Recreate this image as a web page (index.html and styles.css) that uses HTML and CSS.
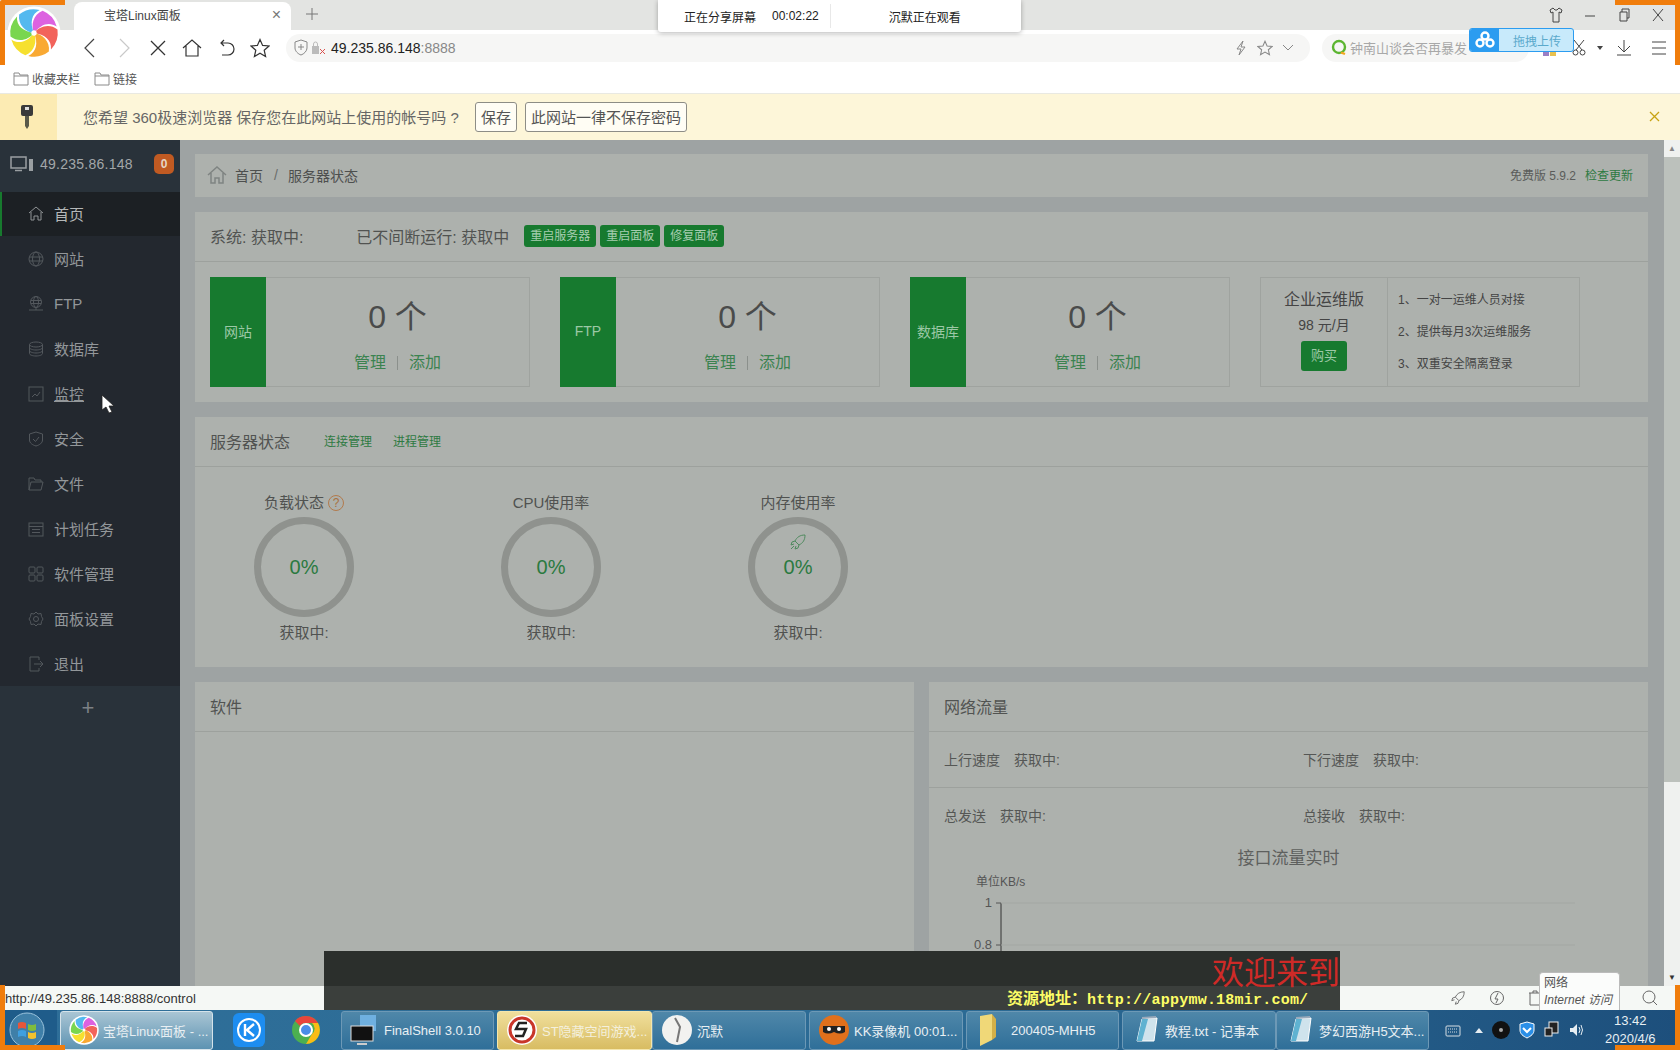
FILE: index.html
```html
<!DOCTYPE html>
<html lang="zh-CN">
<head>
<meta charset="utf-8">
<title>宝塔Linux面板</title>
<link rel="stylesheet" href="styles.css">
</head>
<body>
<svg class="sprites" width="0" height="0">
  <defs>
    <path id="petal" d="M0 0C-3-7-1-17 8-20.500A22 22 0 0 1 21-6C14-11 6-8 0 0Z"/>
    <symbol id="pinwheel" viewBox="-25 -25 50 50">
      <circle r="24.500" fill="#fff"/>
      <use href="#petal" fill="#dd62e0"/>
      <use href="#petal" fill="#f2635b" transform="rotate(60)"/>
      <use href="#petal" fill="#f9a933" transform="rotate(120)"/>
      <use href="#petal" fill="#f6e02f" transform="rotate(180)"/>
      <use href="#petal" fill="#79d64f" transform="rotate(240)"/>
      <use href="#petal" fill="#54b9ef" transform="rotate(300)"/>
      <circle r="2.500" fill="#fff"/>
    </symbol>
    <symbol id="folder" viewBox="0 0 16 14">
      <path d="M1 13V1h5l1 2h8v10z" fill="#fff" stroke="#8a8a8a"/>
      <path d="M1 4h14" stroke="#8a8a8a" fill="none"/>
    </symbol>
    <symbol id="notepad" viewBox="0 0 30 30">
      <path d="M6 26 11 4 26 3 23 26z" fill="#cfe3ec" stroke="#fff"/>
      <path d="M6 26 11 4 17 4 11 26z" fill="#5fb2d1"/>
      <path d="M11 3l14-1" stroke="#9ab" stroke-width="2"/>
    </symbol>
  </defs>
</svg>

<div class="tabstrip">
  <div class="tab">
    <span class="tab-title">宝塔Linux面板</span>
    <span class="tab-x">×</span>
  </div>
  <svg class="tab-plus" width="14" height="14" viewBox="0 0 14 14"><path d="M7 1v12M1 7h12" stroke="#777" fill="none"/></svg>
  <div class="winctl">
    <svg width="14" height="16" viewBox="0 0 14 16"><path d="M4 1 1 3l1 3 2-1v10h6V5l2 1 1-3-3-2-2 2H6z" fill="none" stroke="#444"/></svg>
    <svg width="14" height="16" viewBox="0 0 14 16"><path d="M2 9h10" stroke="#444" fill="none"/></svg>
    <svg width="14" height="16" viewBox="0 0 14 16"><path d="M3 5h7v9H3zM5 5V2h7v9h-2" stroke="#444" fill="none"/></svg>
    <svg width="14" height="16" viewBox="0 0 14 16"><path d="M2 2l10 12M12 2 2 14" stroke="#444" fill="none"/></svg>
  </div>
</div>

<div class="toolbar">
  <button class="nav"><svg width="18" height="20" viewBox="0 0 18 20"><path d="M13 1 4 10l9 9" fill="none" stroke="#444" stroke-width="1.2"/></svg></button>
  <button class="nav"><svg width="18" height="20" viewBox="0 0 18 20"><path d="M5 1l9 9-9 9" fill="none" stroke="#c9c9c9" stroke-width="1.2"/></svg></button>
  <button class="nav"><svg width="18" height="18" viewBox="0 0 18 18"><path d="M2 2l14 14M16 2 2 16" fill="none" stroke="#333" stroke-width="1.3"/></svg></button>
  <button class="nav"><svg width="20" height="20" viewBox="0 0 20 20"><path d="M1 10 10 2l9 8M4 8v10h12V8" fill="none" stroke="#333" stroke-width="1.2"/></svg></button>
  <button class="nav"><svg width="18" height="18" viewBox="0 0 18 18"><path d="M4 4h7a5 5 0 0 1 0 12H5M7 1 4 4l3 3" fill="none" stroke="#333" stroke-width="1.2"/></svg></button>
  <button class="nav"><svg width="20" height="20" viewBox="0 0 20 20"><path d="M10 1.500 12.600 7.400 19 8 14.200 12.200 15.600 18.500 10 15.200 4.400 18.500 5.800 12.200 1 8 7.400 7.400z" fill="none" stroke="#333" stroke-width="1.2"/></svg></button>
  <div class="address">
    <svg width="14" height="17" viewBox="0 0 14 17"><path d="M7 1l6 2v6c0 3-3 6-6 7-3-1-6-4-6-7V3z" fill="none" stroke="#888"/><path d="M7 5v6M4 8h6" stroke="#888"/></svg>
    <svg width="15" height="14" viewBox="0 0 15 14"><rect x="1" y="5" width="7" height="8" fill="#bbb"/><path d="M2.500 5V3a2 2 0 0 1 4 0v2" fill="none" stroke="#bbb"/><path d="M9 8l5 5M14 8l-5 5" stroke="#d9534f"/></svg>
    <span class="url">49.235.86.148<span class="url-port">:8888</span></span>
    <span class="addr-tools">
      <svg width="14" height="16" viewBox="0 0 14 16"><path d="M9 1 3 9h4l-2 6 6-8H7z" fill="none" stroke="#888"/></svg>
      <svg width="16" height="16" viewBox="0 0 20 20"><path d="M10 1.500 12.600 7.400 19 8 14.200 12.200 15.600 18.500 10 15.200 4.400 18.500 5.800 12.200 1 8 7.400 7.400z" fill="none" stroke="#888" stroke-width="1.300"/></svg>
      <svg width="12" height="8" viewBox="0 0 12 8"><path d="M1 1l5 5 5-5" fill="none" stroke="#888"/></svg>
    </span>
  </div>
  <div class="search">
    <svg width="16" height="18" viewBox="0 0 16 18"><circle cx="8" cy="8" r="6" fill="none" stroke="#5cb531" stroke-width="2.400"/><path d="M10 13.500 14 15" stroke="#f2a51f" stroke-width="2.400"/></svg>
    <span class="search-text">钟南山谈会否再暴发</span>
  </div>
  <div class="tools">
    <svg class="tool-apps" width="14" height="18" viewBox="0 0 14 18"><rect x="0" y="12" width="6" height="5" fill="#9a7fc4"/><rect x="7" y="12" width="6" height="5" fill="#e9c14f"/></svg>
    <svg class="tool-cut" width="14" height="17" viewBox="0 0 14 17"><path d="M2 1l8 10M12 1 4 11" stroke="#444" fill="none"/><circle cx="3.500" cy="13.500" r="2.500" fill="none" stroke="#444"/><circle cx="10.500" cy="13.500" r="2.500" fill="none" stroke="#444"/></svg>
    <svg width="6" height="4" viewBox="0 0 6 4"><path d="M0 0h6L3 4z" fill="#444"/></svg>
    <svg class="tool-down" width="16" height="17" viewBox="0 0 16 17"><path d="M8 1v12M2 7l6 6 6-6M1 16h14" fill="none" stroke="#444"/></svg>
    <svg class="tool-menu" width="16" height="16" viewBox="0 0 16 16"><path d="M1 2h14M1 8h14M1 14h14" fill="none" stroke="#444"/></svg>
  </div>
</div>

<div class="bookmarks">
  <span class="bm"><svg width="16" height="14"><use href="#folder"/></svg>收藏夹栏</span>
  <span class="bm"><svg width="16" height="14"><use href="#folder"/></svg>链接</span>
</div>

<div class="infobar">
  <div class="key">
    <svg width="14" height="26" viewBox="0 0 14 26"><rect x="1" y="1" width="12" height="11" rx="2" fill="#3a3a3a"/><rect x="5" y="3" width="4" height="3" fill="#ddd"/><path d="M5 12h4v10l-2 3-2-3z" fill="#5a5a4a"/></svg>
  </div>
  <span class="info-text">您希望 360极速浏览器 保存您在此网站上使用的帐号吗 ?</span>
  <button class="info-btn">保存</button>
  <button class="info-btn">此网站一律不保存密码</button>
  <svg class="info-x" width="11" height="11" viewBox="0 0 11 11"><path d="M1 1l9 9M10 1l-9 9" stroke="#c8a313" stroke-width="1.300" fill="none"/></svg>
</div>

<div class="app">
  <aside class="sidebar">
    <div class="side-head">
      <svg width="24" height="16" viewBox="0 0 24 16"><rect x="1" y="1" width="15" height="11" fill="none" stroke="#9a9fa2" stroke-width="1.500"/><path d="M5 14.500h7" stroke="#9a9fa2" stroke-width="1.500"/><rect x="19" y="3" width="4" height="12" fill="#9a9fa2"/></svg>
      <span class="side-ip">49.235.86.148</span>
      <span class="badge">0</span>
    </div>
    <nav class="menu">
      <a class="menu-item is-active"><svg viewBox="0 0 16 16"><path d="M1 8l7-6 7 6M3 7v8h3v-4h4v4h3V7"/></svg>首页</a>
      <a class="menu-item"><svg viewBox="0 0 16 16"><circle cx="8" cy="8" r="7"/><ellipse cx="8" cy="8" rx="3.500" ry="7"/><path d="M1 6h14M1 10h14"/></svg>网站</a>
      <a class="menu-item"><svg viewBox="0 0 16 16"><circle cx="8" cy="6" r="5.500"/><ellipse cx="8" cy="6" rx="2.500" ry="5.500"/><path d="M3 4.500h10M3 7.500h10M1 14h14M8 12v2"/></svg>FTP</a>
      <a class="menu-item"><svg viewBox="0 0 16 16"><ellipse cx="8" cy="3.500" rx="6.500" ry="2.500"/><path d="M1.500 3.500v9c0 1.400 3 2.500 6.500 2.500s6.500-1.100 6.500-2.500v-9M1.500 6.500c0 1.400 3 2.500 6.500 2.500s6.500-1.100 6.500-2.500M1.500 9.500c0 1.400 3 2.500 6.500 2.500s6.500-1.100 6.500-2.500"/></svg>数据库</a>
      <a class="menu-item"><svg viewBox="0 0 16 16"><rect x="1" y="1" width="14" height="14"/><path d="M4 11l3-3 2 2 3-4"/></svg><span class="hover-u">监控</span></a>
      <a class="menu-item"><svg viewBox="0 0 16 16"><path d="M8 1l6.500 2v6c0 3-3 5-6.500 6-3.500-1-6.500-3-6.500-6V3z"/><path d="M5 8l2.500 2.500L11 6"/></svg>安全</a>
      <a class="menu-item"><svg viewBox="0 0 16 16"><path d="M1 14V2h5l1 2h6v2M1 14l2-8h12l-2 8z"/></svg>文件</a>
      <a class="menu-item"><svg viewBox="0 0 16 16"><rect x="1" y="2" width="14" height="13"/><path d="M1 5.500h14M4 8.500h8M4 11.500h8"/></svg>计划任务</a>
      <a class="menu-item"><svg viewBox="0 0 16 16"><rect x="1" y="1" width="6" height="6" rx="1"/><rect x="9" y="1" width="6" height="6" rx="1"/><rect x="1" y="9" width="6" height="6" rx="1"/><rect x="9" y="9" width="6" height="6" rx="1"/></svg>软件管理</a>
      <a class="menu-item"><svg viewBox="0 0 16 16"><path d="M8 1l2 2 3-.5.500 3L15 8l-1.500 2.500-.5 3-3-.5-2 2-2-2-3 .5-.5-3L1 8l1.500-2.500.5-3 3 .5z"/><circle cx="8" cy="8" r="2.500"/></svg>面板设置</a>
      <a class="menu-item"><svg viewBox="0 0 16 16"><path d="M11 4V1H2v14h9v-3M6 8h9M12 5l3 3-3 3"/></svg>退出</a>
    </nav>
    <div class="side-add">+</div>
  </aside>

  <main class="main">
    <section class="panel crumb">
      <svg width="20" height="18" viewBox="0 0 20 18"><path d="M1 9l9-8 9 8M4 7v10h4v-5h4v5h4V7" fill="none" stroke="#7f8482" stroke-width="1.500"/></svg>
      <span class="crumb-a">首页</span>
      <span class="crumb-sep">/</span>
      <span class="crumb-b">服务器状态</span>
      <span class="crumb-right">免费版 5.9.2<a class="update">检查更新</a></span>
    </section>

    <section class="panel">
      <div class="panel-head sys-head">
        <span class="sys-a">系统: 获取中:</span>
        <span class="sys-b">已不间断运行: 获取中</span>
        <span class="gbtn">重启服务器</span>
        <span class="gbtn">重启面板</span>
        <span class="gbtn">修复面板</span>
      </div>
      <div class="cards">
        <div class="card"><div class="card-tag">网站</div><div class="card-body"><div class="count">0 个</div><div class="links"><a>管理</a><i></i><a>添加</a></div></div></div>
        <div class="card"><div class="card-tag">FTP</div><div class="card-body"><div class="count">0 个</div><div class="links"><a>管理</a><i></i><a>添加</a></div></div></div>
        <div class="card"><div class="card-tag">数据库</div><div class="card-body"><div class="count">0 个</div><div class="links"><a>管理</a><i></i><a>添加</a></div></div></div>
        <div class="promo">
          <div class="promo-left">
            <div class="promo-title">企业运维版</div>
            <div class="promo-price">98 元/月</div>
            <span class="promo-buy">购买</span>
          </div>
          <ul class="promo-list">
            <li>1、一对一运维人员对接</li>
            <li>2、提供每月3次运维服务</li>
            <li>3、双重安全隔离登录</li>
          </ul>
        </div>
      </div>
    </section>

    <section class="panel">
      <div class="panel-head status-head">
        <span class="panel-title">服务器状态</span>
        <a class="glink">连接管理</a>
        <a class="glink">进程管理</a>
      </div>
      <div class="gauges">
        <div class="gauge">
          <div class="gauge-label">负载状态 <span class="help">?</span></div>
          <div class="ring">0%</div>
          <div class="gauge-sub">获取中:</div>
        </div>
        <div class="gauge">
          <div class="gauge-label">CPU使用率</div>
          <div class="ring">0%</div>
          <div class="gauge-sub">获取中:</div>
        </div>
        <div class="gauge">
          <div class="gauge-label">内存使用率</div>
          <div class="ring">
            <svg class="rocket" width="18" height="18" viewBox="0 0 18 18"><path d="M16 2c-5 0-8 2-10 6l4 4c4-2 6-5 6-10zM6 8 3 9l-1 3 3-1M10 12l-1 3-3 1 1-3M5 13l-3 3" fill="none" stroke="#4f8a5e"/></svg>
            0%
          </div>
          <div class="gauge-sub">获取中:</div>
        </div>
      </div>
    </section>

    <div class="split">
      <section class="panel half">
        <div class="panel-head"><span class="panel-title">软件</span></div>
      </section>
      <section class="panel half">
        <div class="panel-head"><span class="panel-title">网络流量</span></div>
        <div class="net-row line"><span class="net-cell"><b>上行速度</b>获取中:</span><span class="net-cell"><b>下行速度</b>获取中:</span></div>
        <div class="net-row"><span class="net-cell"><b>总发送</b>获取中:</span><span class="net-cell"><b>总接收</b>获取中:</span></div>
        <div class="chart-title">接口流量实时</div>
        <svg class="chart" width="719" height="160" viewBox="0 0 719 160">
          <text x="47" y="15" class="chart-unit">单位KB/s</text>
          <path d="M72 32V160" stroke="#333" fill="none"/>
          <path d="M67 32h5M67 74h5M67 116h5" stroke="#555" fill="none"/>
          <path d="M72 32H646M72 74H646M72 116H646" stroke="#a3a7a3" fill="none"/>
          <text x="63" y="36" class="chart-num" text-anchor="end">1</text>
          <text x="63" y="78" class="chart-num" text-anchor="end">0.8</text>
          <text x="63" y="120" class="chart-num" text-anchor="end">0.6</text>
        </svg>
      </section>
    </div>
  </main>

  <div class="scrollbar">
    <span class="sb-arrow">▲</span>
    <div class="sb-thumb"></div>
    <div class="sb-track"></div>
    <span class="sb-arrow sb-down">▼</span>
  </div>
</div>

<div class="statusbar">
  <span class="status-url">http://49.235.86.148:8888/control</span>
  <span class="status-icons">
    <svg width="16" height="16" viewBox="0 0 18 18"><path d="M16 2c-5 0-8 2-10 6l4 4c4-2 6-5 6-10zM6 8 3 9l-1 3 3-1M10 12l-1 3-3 1 1-3" fill="none" stroke="#666"/></svg>
    <svg width="16" height="16" viewBox="0 0 16 16"><circle cx="8" cy="8" r="6.500" fill="none" stroke="#666"/><path d="M9 3 6 9h3l-2 4" fill="none" stroke="#666"/></svg>
    <svg width="14" height="16" viewBox="0 0 14 16"><path d="M1 3h12M5 3V1h4v2M2 3v12h10V3" fill="none" stroke="#666"/></svg>
    <svg class="status-find" width="16" height="16" viewBox="0 0 16 16"><circle cx="7" cy="7" r="6" fill="none" stroke="#666"/><path d="M11 11l4 4" stroke="#666"/></svg>
  </span>
</div>

<footer class="taskbar">
  <div class="orb">
    <svg width="36" height="36" viewBox="0 0 36 36"><circle cx="18" cy="18" r="17" fill="#3f7fa8" stroke="#9bc3dc"/><path d="M9 11q4-2 8 0v6q-4-2-8 0z" fill="#e6563a"/><path d="M19 12q4 2 8 0v6q-4 2-8 0z" fill="#7fbd3c"/><path d="M9 19q4-2 8 0v6q-4-2-8 0z" fill="#3f9fe0"/><path d="M19 20q4 2 8 0v6q-4 2-8 0z" fill="#f2c12e"/></svg>
  </div>
  <div class="task task-light w153"><svg width="30" height="30"><use href="#pinwheel"/></svg>宝塔Linux面板 - ...</div>
  <div class="quick">
    <svg width="32" height="34" viewBox="0 0 32 34"><rect width="32" height="34" rx="6" fill="#1d8df0"/><circle cx="16" cy="17" r="11" fill="none" stroke="#fff" stroke-width="2"/><path d="M12 11v12M21 11l-7 6 7 6" fill="none" stroke="#fff" stroke-width="2.400"/></svg>
    <svg width="30" height="30" viewBox="0 0 30 30"><circle cx="15" cy="15" r="14" fill="#4caf50"/><path d="M15 1a14 14 0 0 1 12 7H15a7 7 0 0 0-6 3L4 6a14 14 0 0 1 11-5z" fill="#e8453c"/><path d="M27 8a14 14 0 0 1-12 21l6-10a7 7 0 0 0 0-11z" fill="#f9bc15"/><circle cx="15" cy="15" r="6" fill="#4a8de8" stroke="#fff" stroke-width="2"/></svg>
  </div>
  <div class="task w153"><svg width="30" height="32" viewBox="0 0 30 32"><rect x="10" y="1" width="16" height="16" fill="#6fb0e0"/><rect x="1" y="12" width="22" height="15" fill="#111" stroke="#ddd"/><path d="M7 30h10" stroke="#ccc" stroke-width="2"/></svg>FinalShell 3.0.10</div>
  <div class="task-group">
    <div class="task task-yellow w155"><svg width="32" height="32" viewBox="0 0 32 32"><circle cx="16" cy="16" r="15" fill="#fff"/><circle cx="16" cy="16" r="12" fill="none" stroke="#c9362a" stroke-width="3"/><path d="M21 9H13l-3 6h10l-3 7H9" fill="none" stroke="#222" stroke-width="2.500"/></svg>ST隐藏空间游戏...</div>
    <div class="task w154"><svg width="32" height="32" viewBox="0 0 32 32"><circle cx="16" cy="16" r="15" fill="#f2f2f0"/><path d="M14 4l5 9-3 15" fill="none" stroke="#777" stroke-width="2"/></svg>沉默</div>
  </div>
  <div class="task w154"><svg width="32" height="32" viewBox="0 0 32 32"><circle cx="16" cy="16" r="15" fill="#e0701c"/><path d="M5 12h22v6q-5 3-11 0-6 3-11 0z" fill="#222"/><circle cx="11" cy="15" r="2" fill="#fff"/><circle cx="21" cy="15" r="2" fill="#fff"/></svg>KK录像机 00:01...</div>
  <div class="task w153"><svg width="26" height="34" viewBox="0 0 26 34"><path d="M5 3 17 1v26L5 33z" fill="#f0d878"/><path d="M17 1l4 5v18l-4 3z" fill="#d4b048"/></svg><span class="task-pad">200405-MHH5</span></div>
  <div class="task-group">
    <div class="task w154"><svg width="30" height="30"><use href="#notepad"/></svg>教程.txt - 记事本</div>
    <div class="task w153"><svg width="30" height="30"><use href="#notepad"/></svg>梦幻西游H5文本...</div>
  </div>
  <div class="tray">
    <svg class="tray-kbd" width="16" height="14" viewBox="0 0 16 14"><rect x="1" y="3" width="14" height="10" rx="1" fill="none" stroke="#d5dde2"/><path d="M3 6h10M3 9h10" stroke="#d5dde2" stroke-dasharray="1 1"/></svg>
    <svg width="8" height="5" viewBox="0 0 8 5"><path d="M0 5l4-5 4 5z" fill="#e6edf2"/></svg>
    <svg width="18" height="18" viewBox="0 0 18 18"><circle cx="9" cy="9" r="9" fill="#111"/><circle cx="9" cy="9" r="2" fill="#aaa"/></svg>
    <svg width="16" height="18" viewBox="0 0 16 18"><path d="M8 1l7 2v6c0 4-3 6-7 8-4-2-7-4-7-8V3z" fill="#2a8fe8" stroke="#fff"/><path d="M4 7l4 4 4-4" fill="none" stroke="#fff" stroke-width="2"/></svg>
    <svg width="16" height="18" viewBox="0 0 16 18"><rect x="5" y="1" width="9" height="11" fill="#222" stroke="#eee"/><rect x="1" y="7" width="7" height="8" fill="#222" stroke="#eee"/></svg>
    <svg width="16" height="16" viewBox="0 0 16 16"><path d="M1 6v4h3l4 4V2L4 6z" fill="#e6edf2"/><path d="M10 5q2 3 0 6M12 3q3 5 0 10" fill="none" stroke="#e6edf2"/></svg>
    <div class="clock"><span>13:42</span><span>2020/4/6</span></div>
  </div>
</footer>

<svg class="logo" width="54" height="54"><use href="#pinwheel"/></svg>

<div class="share">
  <span class="share-a">正在分享屏幕</span>
  <span class="share-time">00:02:22</span>
  <span class="share-b">沉默正在观看</span>
</div>

<div class="upload">
  <span class="upload-ico"><svg width="20" height="18" viewBox="0 0 20 18"><circle cx="10" cy="5" r="3.500" fill="none" stroke="#fff" stroke-width="2.400"/><circle cx="5" cy="12" r="3.500" fill="none" stroke="#fff" stroke-width="2.400"/><circle cx="15" cy="12" r="3.500" fill="none" stroke="#fff" stroke-width="2.400"/></svg></span>
  <span class="upload-text">拖拽上传</span>
</div>

<svg class="cursor" width="14" height="20" viewBox="0 0 14 20"><path d="M1 1v15l4-3 3 6 3-1-3-6h5z" fill="#fff" stroke="#222" stroke-width=".8"/></svg>

<div class="ribbon">
  <div class="ribbon-top"><span class="ribbon-red">欢迎来到</span></div>
  <div class="ribbon-bottom"><span class="ribbon-yellow">资源地址：<span class="ribbon-url">http://appymw.18mir.com/</span></span></div>
</div>

<div class="nettip"><span>网络</span><em>Internet 访问</em></div>

<div class="corner c-tl"></div>
<div class="corner c-tr"></div>
<div class="corner c-bl"></div>
<div class="corner c-br"></div>
</body>
</html>
```

FILE: styles.css
```css
* { box-sizing: border-box; }
html, body { margin: 0; padding: 0; }
body {
  position: relative;
  width: 1680px;
  height: 1050px;
  overflow: hidden;
  display: flex;
  flex-direction: column;
  background: #fff;
  font-family: "Liberation Sans", "Noto Sans CJK SC", sans-serif;
  color: #555;
}
.sprites { position: absolute; }
a { color: inherit; text-decoration: none; }
button { font-family: inherit; }

/* browser frame */
.tabstrip {
  height: 30px;
  flex: none;
  display: flex;
  align-items: flex-end;
  background: #e3e4e2;
  padding-left: 74px;
}
.tab {
  width: 217px;
  height: 28px;
  display: flex;
  align-items: center;
  justify-content: space-between;
  padding: 0 10px 3px 30px;
  background: #fff;
  border-radius: 8px 8px 0 0;
  font-size: 12px;
  color: #444;
}
.tab-x { font-size: 16px; color: #777; }
.tab-plus { margin: 0 0 9px 14px; }
.winctl {
  margin: 0 15px 7px auto;
  display: flex;
  gap: 20px;
}
.toolbar {
  height: 32px;
  flex: none;
  display: flex;
  align-items: center;
  padding: 3px 0 0 73px;
  background: #fff;
  position: relative;
}
.nav {
  width: 34px;
  height: 28px;
  padding: 0;
  border: 0;
  background: none;
  display: flex;
  align-items: center;
  justify-content: center;
}
.address {
  width: 1024px;
  height: 28px;
  margin-left: 9px;
  display: flex;
  align-items: center;
  gap: 3px;
  padding-left: 8px;
  padding-right: 16px;
  background: #f6f6f5;
  border-radius: 14px;
}
.url { font-size: 14px; color: #222; margin-left: 2px; }
.url-port { color: #888; }
.addr-tools { margin-left: auto; display: flex; align-items: center; gap: 9px; }
.search {
  width: 207px;
  height: 28px;
  margin-left: 12px;
  display: flex;
  align-items: center;
  gap: 3px;
  padding-left: 9px;
  background: #f6f6f5;
  border-radius: 14px;
}
.search-text { font-size: 13px; color: #a8a8a8; white-space: nowrap; }
.tools {
  margin-left: 14px;
  display: flex;
  align-items: center;
  gap: 11px;
}
.tool-apps { margin-right: 4px; }
.tool-down { margin-left: 2px; }
.tool-menu { margin-left: 8px; }
.bookmarks {
  height: 32px;
  flex: none;
  display: flex;
  align-items: center;
  gap: 14px;
  padding: 2px 0 0 13px;
  background: #fff;
  border-bottom: 1px solid #e9e9e2;
}
.bm {
  display: flex;
  align-items: center;
  gap: 3px;
  font-size: 12px;
  color: #555;
}
.infobar {
  height: 46px;
  flex: none;
  display: flex;
  align-items: center;
  padding-bottom: 1px;
  background: #fdf6d9;
}
.key {
  width: 57px;
  height: 46px;
  margin-bottom: -1px;
  padding-right: 4px;
  display: flex;
  align-items: center;
  justify-content: center;
  background: #fcebb3;
}
.info-text { margin-left: 26px; font-size: 15px; color: #666; }
.info-btn {
  height: 30px;
  margin-left: 8px;
  padding: 0 5px;
  background: #fffdf4;
  border: 1px solid #8d8d86;
  border-radius: 3px;
  font-size: 15px;
  color: #555;
}
.info-btn:first-of-type { margin-left: 16px; }
.info-x { margin-left: auto; margin-right: 20px; }

/* app */
.app {
  height: 846px;
  flex: none;
  display: flex;
  overflow: hidden;
}
.sidebar {
  width: 180px;
  flex: none;
  display: flex;
  flex-direction: column;
  background: #29323a;
}
.side-head {
  height: 52px;
  flex: none;
  display: flex;
  align-items: center;
  padding: 0 0 4px 10px;
  gap: 6px;
}
.side-ip { font-size: 14px; letter-spacing: .25px; color: #a3a7a9; }
.badge {
  width: 20px;
  height: 20px;
  margin-left: auto;
  margin-right: 6px;
  border-radius: 5px;
  background: #c05a22;
  color: #e6d5c5;
  font-size: 12px;
  font-weight: bold;
  text-align: center;
  line-height: 20px;
}
.menu { background: #23282f; }
.menu-item {
  height: 45px;
  display: flex;
  align-items: center;
  gap: 10px;
  padding-left: 28px;
  font-size: 15px;
  color: #93979a;
}
.menu-item svg {
  width: 16px;
  height: 16px;
  flex: none;
  fill: none;
  stroke: #53585d;
  stroke-width: 1;
}
.menu-item.is-active {
  height: 44px;
  padding-bottom: 2px;
  background: #1c2024;
  box-shadow: inset 2px 0 0 #177a2e;
  color: #b4b7b8;
}
.menu-item.is-active svg { stroke: #8f9395; }
.hover-u { text-decoration: underline; }
.side-add {
  height: 42px;
  padding-right: 4px;
  text-align: center;
  font-size: 22px;
  line-height: 43px;
  color: #7c8185;
}

.main {
  flex: 1;
  min-width: 0;
  padding: 14px 16px 0 15px;
  background: #9ea3a3;
  overflow: hidden;
}
.panel {
  background: #adb1ad;
  margin-bottom: 15px;
}
.crumb {
  height: 43px;
  display: flex;
  align-items: center;
  padding: 0 15px 2px 12px;
  font-size: 14px;
  color: #4d4f4e;
}
.crumb-a { margin-left: 8px; }
.crumb-sep { margin: 0 10px 0 11px; color: #6a6d6b; }
.crumb-right { margin-left: auto; font-size: 12px; color: #5a5c5a; }
.update { margin-left: 9px; color: #2d7a42; }

.panel-head {
  height: 50px;
  display: flex;
  align-items: center;
  padding: 0 0 2px 15px;
  border-bottom: 1px solid #9da19d;
}
.panel-title { font-size: 16px; color: #515351; }
.sys-head { font-size: 16px; color: #515351; padding-bottom: 1px; }
.sys-head > span:nth-child(-n+2) { margin-bottom: 1px; }
.sys-b { margin-left: 53px; margin-right: 15px; }
.gbtn {
  height: 22px;
  margin-right: 4px;
  padding: 0 6px;
  background: #177a2f;
  border-radius: 3px;
  font-size: 12px;
  line-height: 22px;
  color: #a6cdb0;
}
.cards {
  display: flex;
  gap: 30px;
  padding: 15px;
}
.card {
  width: 320px;
  height: 110px;
  display: flex;
  border: 1px solid #9fa39f;
}
.card-tag {
  width: 56px;
  margin: -1px 0 -1px -1px;
  padding-bottom: 2px;
  display: flex;
  align-items: center;
  justify-content: center;
  background: #177a2f;
  color: #9cc8a6;
  font-size: 14px;
}
.card-body {
  flex: 1;
  display: flex;
  flex-direction: column;
  align-items: center;
}
.count {
  margin-top: 16px;
  font-size: 32px;
  line-height: 46px;
  color: #4a4b4b;
}
.links {
  margin-top: 11px;
  display: flex;
  align-items: center;
  gap: 11px;
  font-size: 16px;
  line-height: 24px;
  color: #3b8350;
}
.links i {
  width: 1px;
  height: 14px;
  background: #8b908c;
}
.promo {
  width: 320px;
  height: 110px;
  display: flex;
  border: 1px solid #9fa39f;
}
.promo-left {
  width: 127px;
  display: flex;
  flex-direction: column;
  align-items: center;
  border-right: 1px solid #9fa39f;
}
.promo-title { margin-top: 10px; font-size: 16px; line-height: 24px; color: #444; }
.promo-price { font-size: 14px; line-height: 26px; color: #444; }
.promo-buy {
  width: 46px;
  height: 30px;
  margin-top: 3px;
  background: #177a2f;
  border-radius: 3px;
  font-size: 13px;
  line-height: 30px;
  text-align: center;
  color: #9cc8a6;
}
.promo-list {
  list-style: none;
  margin: 0;
  padding: 6px 0 0 10px;
  font-size: 12px;
  line-height: 32px;
  color: #444;
}

.status-head { gap: 21px; }
.status-head .panel-title { margin-right: 13px; }
.glink { font-size: 12px; color: #2d7a42; }
.gauges {
  display: flex;
  gap: 59px;
  padding: 24px 0 22px 15px;
}
.gauge {
  width: 188px;
  display: flex;
  flex-direction: column;
  align-items: center;
}
.gauge-label {
  height: 24px;
  font-size: 15px;
  line-height: 24px;
  color: #505250;
  white-space: nowrap;
}
.help {
  display: inline-block;
  width: 16px;
  height: 16px;
  border: 1px solid #b27a4c;
  border-radius: 50%;
  font-size: 12px;
  line-height: 14px;
  text-align: center;
  color: #a8703f;
  vertical-align: 1px;
}
.ring {
  position: relative;
  width: 100px;
  height: 100px;
  margin-top: 2px;
  display: flex;
  align-items: center;
  justify-content: center;
  border: 7px solid #8f928e;
  border-radius: 50%;
  font-size: 20px;
  color: #2a7a40;
}
.rocket { position: absolute; left: 34px; top: 9px; }
.gauge-sub {
  margin-top: 4px;
  font-size: 15px;
  line-height: 24px;
  color: #505250;
}
.split {
  display: flex;
  gap: 15px;
}
.half {
  flex: 1;
  min-width: 0;
  height: 420px;
}
.net-row {
  height: 55px;
  display: flex;
  align-items: center;
  padding: 0 0 2px 15px;
  font-size: 14px;
  color: #555755;
}
.net-row.line { height: 56px; border-bottom: 1px solid #9da19d; }
.net-cell { width: 359px; flex: none; }
.net-cell b { font-weight: normal; margin-right: 14px; }
.chart-title {
  height: 28px;
  padding-top: 2px;
  font-size: 17px;
  line-height: 28px;
  text-align: center;
  color: #5e605e;
}
.chart { display: block; }
.chart-unit { font-size: 12px; fill: #555; }
.chart-num { font-size: 13px; fill: #555; }

.scrollbar {
  width: 16px;
  flex: none;
  display: flex;
  flex-direction: column;
  background: #eff1ef;
}
.sb-arrow {
  height: 17px;
  font-size: 8px;
  line-height: 17px;
  text-align: center;
  color: #888;
}
.sb-down { color: #333; }
.sb-thumb { height: 625px; background: #bcc1bc; }
.sb-track { flex: 1; }

.statusbar {
  height: 24px;
  flex: none;
  display: flex;
  align-items: center;
  padding-left: 5px;
  background: #f5f8f5;
  font-size: 13px;
  color: #333;
}
.status-icons {
  margin-left: auto;
  margin-right: 22px;
  display: flex;
  align-items: center;
  gap: 23px;
}
.status-find { margin-left: 77px; }

.taskbar {
  height: 40px;
  flex: none;
  display: flex;
  align-items: stretch;
  gap: 3px;
  background: linear-gradient(90deg, #2f6f99 0%, #2b6a94 60%, #1d4f7c 100%);
  color: #e8eff3;
  font-size: 13px;
}
.orb {
  width: 57px;
  padding-right: 4px;
  display: flex;
  align-items: center;
  justify-content: center;
  background: #1f5c8a;
}
.task {
  display: flex;
  align-items: center;
  gap: 4px;
  padding: 0 0 1px 8px;
  white-space: nowrap;
  overflow: hidden;
  margin-top: 1px;
  border: 1px solid #6d99b6;
  border-radius: 3px;
  background: linear-gradient(#4f87a9, #2f6f99);
}
.task-light { background: linear-gradient(#a9c5d4, #5d93b2); border-color: #d5e3ea; }
.task-yellow {
  background: linear-gradient(#f0df9c, #d8bc62);
  border-color: #f4e6ac;
  color: #f4f0dd;
}
.w153 { width: 153px; }
.w154 { width: 154px; }
.w155 { width: 155px; }
.task-pad { margin-left: 6px; }
.quick {
  width: 122px;
  display: flex;
  align-items: center;
  justify-content: space-between;
  padding: 0 17px;
}
.task-group { display: flex; }
.tray {
  flex: 1;
  min-width: 0;
  display: flex;
  align-items: center;
  gap: 9px;
  padding-left: 13px;
  font-size: 13px;
}
.tray-kbd { margin-right: 5px; }
.clock {
  margin-left: 11px;
  display: flex;
  flex-direction: column;
  align-items: center;
  line-height: 18px;
}

/* overlays */
.logo { position: absolute; left: 7px; top: 6px; }
.share {
  position: absolute;
  left: 658px;
  top: 0;
  width: 363px;
  height: 32px;
  display: flex;
  align-items: center;
  padding-left: 26px;
  background: #fff;
  border-radius: 0 0 3px 3px;
  box-shadow: 0 1px 5px rgba(0, 0, 0, .3);
  font-size: 12px;
  color: #222;
}
.share-time { margin-left: 16px; padding-right: 11px; border-right: 1px solid #e8e8e8; line-height: 24px; }
.share-b { margin-left: 58px; }
.upload {
  position: absolute;
  left: 1469px;
  top: 28px;
  width: 105px;
  height: 24px;
  display: flex;
  align-items: center;
  border-radius: 3px;
  overflow: hidden;
  background: #c8eafb;
  border: 1px solid #2c9cf0;
}
.upload-ico {
  width: 29px;
  height: 100%;
  display: flex;
  align-items: center;
  justify-content: center;
  background: #2c9cf0;
}
.upload-text { margin-left: 14px; font-size: 12px; color: #5aa9cc; }
.cursor { position: absolute; left: 101px; top: 394px; }
.ribbon {
  position: absolute;
  left: 324px;
  top: 951px;
  width: 1016px;
  height: 59px;
  overflow: hidden;
  display: flex;
  flex-direction: column;
}
.ribbon-top {
  height: 35px;
  flex: none;
  padding-top: 8px;
  display: flex;
  justify-content: flex-end;
  align-items: center;
  background: #2b2f2c;
}
.ribbon-red {
  position: relative;
  font-family: "Liberation Serif", "Noto Sans CJK SC", serif;
  font-size: 32px;
  line-height: 40px;
  color: #cf2a27;
  white-space: nowrap;
}
.ribbon-bottom {
  flex: 1;
  padding: 2px 0 0 683px;
  background: #3b3f3c;
  font-family: "Liberation Mono", "Noto Sans CJK SC", monospace;
  font-size: 16px;
  font-weight: bold;
  line-height: 24px;
  color: #fdfd66;
  white-space: nowrap;
}
.ribbon-url { font-size: 15px; letter-spacing: .22px; }
.nettip {
  position: absolute;
  left: 1539px;
  top: 972px;
  width: 81px;
  height: 38px;
  display: flex;
  flex-direction: column;
  padding: 2px 4px;
  background: #fbfcfb;
  border: 1px solid #bbb;
  border-bottom: 0;
  border-radius: 4px 4px 0 0;
  font-size: 12px;
  line-height: 17px;
  color: #555;
}
.nettip em { white-space: nowrap; }
.corner {
  position: absolute;
  width: 65px;
  height: 65px;
  border: 0 solid #f07d0c;
}
.c-tl { left: 0; top: 0; border-width: 5px 0 0 5px; border-top-left-radius: 3px; }
.c-tr { right: 0; top: 0; border-width: 5px 5px 0 0; }
.c-bl { left: 0; bottom: 0; border-width: 0 0 5px 5px; }
.c-br { right: 0; bottom: 0; border-width: 0 5px 5px 0; }
```
